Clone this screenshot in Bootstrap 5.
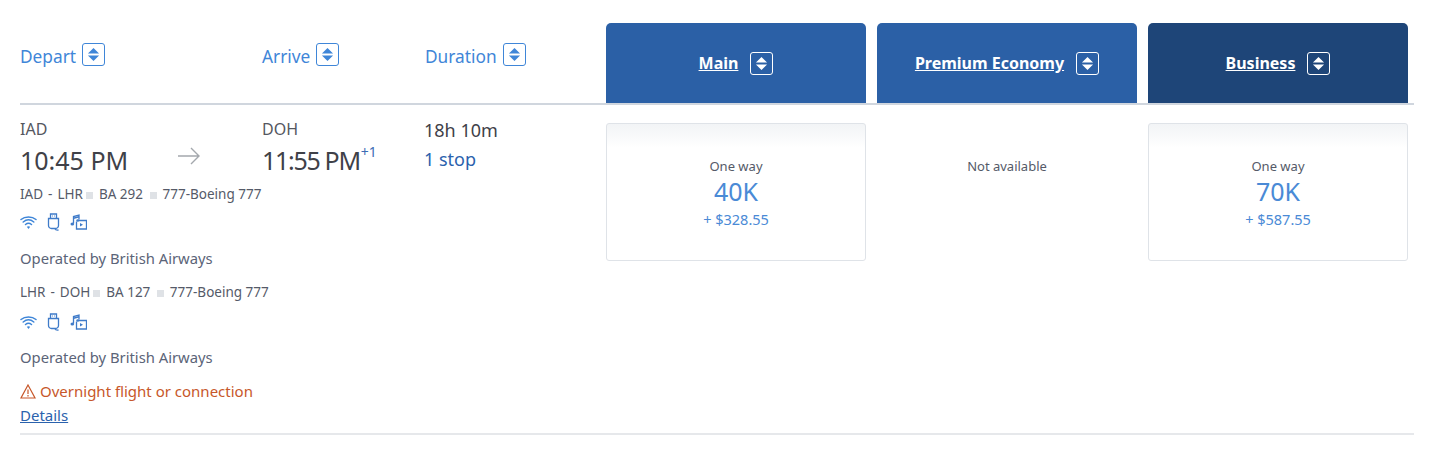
<!DOCTYPE html>
<html lang="en">
<head>
  <meta charset="UTF-8">
  <title>Flight results</title>
  <link href="https://cdn.jsdelivr.net/npm/bootstrap@5.3.0/dist/css/bootstrap.min.css" rel="stylesheet">
  <style>
    body { font-family: "Noto Sans", "Open Sans", sans-serif; color: #4d4f5c; background: #fff; }
    .results { width: 1394px; margin-left: 20px; }
    .head-row { height: 82px; margin-top: 23px; border-bottom: 2px solid #d0d6de; }
    .w-depart { width: 242px; }
    .w-arrive { width: 163px; }
    .w-duration { width: 181px; }
    .fare-cols { width: 802px; gap: 11px; }
    .fare-w { width: 260px; }
    .sort-head { color: #3f86d8; font-size: 17.300px; line-height: 24px; padding-top: 20px; }
    .sort-box { width: 23px; height: 23px; border: 1px solid currentColor; border-radius: 3px; display: inline-flex; align-items: center; justify-content: center; margin-left: 6px; vertical-align: 1px; }
    .cabin { background: #2b60a6; height: 80px; border-radius: 5px 5px 0 0; color: #fff; font-weight: 700; font-size: 16px; }
    .cabin a { color: #fff; }
    .cabin .sort-box { margin-left: 12px; }
    .cabin-dark { background: #1e4578; }
    .flight-row { height: 330px; border-bottom: 2px solid #e6e8eb; }
    .info-col { width: 586px; }
    .airport { font-size: 16px; line-height: 22px; padding-top: 13px; color: #55575f; }
    .clock { font-size: 25px; line-height: 34px; margin-top: 3px; color: #3f4148; white-space: nowrap; }
    .clock-tight { letter-spacing: -1.300px; }
    .clock sup { font-size: 14px; letter-spacing: 0; margin-left: 1px; color: #3c6cb5; top: -13px; }
    .arrow-mark { margin: 6px 0 0 157px; }
    .dur { font-size: 18px; line-height: 26px; padding-top: 12px; margin-left: -1px; color: #3f4148; }
    .stops { font-size: 18px; line-height: 32px; margin-left: -1px; color: #2b62ad; }
    .seg { font-size: 13.500px; line-height: 20px; color: #555a68; white-space: nowrap; }
    .seg-first { margin-top: 7px; }
    .seg-code { word-spacing: 1.500px; }
    .seg-dot { display: inline-block; width: 7px; height: 7px; background: #dfe2e6; margin: 0 6px 0 3px; }
    .amenities { height: 18px; margin-top: 9px; gap: 10px; }
    .amenities svg { display: block; }
    .amenities-low { margin-top: 11px; }
    .operated { font-size: 14.800px; line-height: 20px; color: #5b6478; margin-top: 17px; margin-bottom: 14px; }
    .operated-low { margin-top: 16px; }
    .overnight { font-size: 15px; line-height: 20px; color: #c7572a; margin-top: 14px; }
    .details-link { font-size: 15px; line-height: 20px; color: #2b62ad; margin-top: 4px; display: inline-block; }
    .fare-box { height: 138px; margin-top: 18px; border: 1px solid #dfe3e8; border-radius: 3px; background: linear-gradient(#f2f4f6, #fff 24px); text-align: center; padding-top: 33px; }
    .fare-none { margin-top: 18px; text-align: center; padding-top: 34px; font-size: 13px; line-height: 18px; color: #555a68; }
    .fare-label { font-size: 13px; line-height: 18px; color: #555a68; }
    .fare-miles { font-size: 25px; line-height: 34px; margin-top: -1px; color: #4a8ad6; }
    .fare-cash { font-size: 14.500px; line-height: 20px; margin-top: 1px; color: #4a8ad6; }
  </style>
</head>
<body>
  <svg width="0" height="0" class="position-absolute">
    <symbol id="sort-icon" viewBox="0 0 14 16">
      <path d="M7 1 13 7H1zM7 15 1 9h12z" fill="currentColor"/>
    </symbol>
    <symbol id="wifi-icon" viewBox="0 0 17 15" fill="none" stroke="currentColor" stroke-width="1.500" stroke-linecap="round">
      <path d="M1 4.500C5 1 12 1 16 4.500"/>
      <path d="M3.200 7C6.500 4.300 10.500 4.300 13.800 7"/>
      <path d="M5.500 9.500C7.300 8 9.700 8 11.500 9.500"/>
      <path d="M8.500 14 6.800 11.700C7.800 11 9.200 11 10.200 11.700z" fill="currentColor" stroke="none"/>
    </symbol>
    <symbol id="usb-icon" viewBox="0 0 13 18" fill="none" stroke="currentColor" stroke-width="1.300">
      <path d="M3.500 1h6v4.500h-6zM1.500 5.500h10v7a3 3 0 0 1-3 3h-4a3 3 0 0 1-3-3zM7.500 15.500c1 1.500 2.500 1.800 4 1.500"/>
      <path d="M5.200 3h.8M7.200 3h.8" stroke-width="1"/>
    </symbol>
    <symbol id="media-icon" viewBox="0 0 17 16" fill="none" stroke="currentColor" stroke-width="1.300">
      <path d="M3.500 9.500V2.500L9 1v4.500"/>
      <path d="M3.500 4.300 9 2.800" stroke-width="1.500"/>
      <ellipse cx="2.300" cy="10" rx="1.800" ry="1.500" fill="currentColor" stroke="none"/>
      <ellipse cx="7.800" cy="6.500" rx="1.500" ry="1.200" fill="currentColor" stroke="none"/>
      <path d="M6.500 7.500V15h10V6.500H9"/>
      <path d="M10 9v3.500l3-1.700z" fill="currentColor" stroke="none"/>
    </symbol>
  </svg>

  <div class="results">
    <div class="head-row d-flex">
      <div class="w-depart sort-head">Depart<span class="sort-box"><svg width="13" height="15"><use href="#sort-icon"/></svg></span></div>
      <div class="w-arrive sort-head">Arrive<span class="sort-box"><svg width="13" height="15"><use href="#sort-icon"/></svg></span></div>
      <div class="w-duration sort-head">Duration<span class="sort-box"><svg width="13" height="15"><use href="#sort-icon"/></svg></span></div>
      <div class="fare-cols d-flex">
        <div class="fare-w cabin d-flex align-items-center justify-content-center"><a href="#">Main</a><span class="sort-box"><svg width="13" height="15"><use href="#sort-icon"/></svg></span></div>
        <div class="fare-w cabin d-flex align-items-center justify-content-center"><a href="#">Premium Economy</a><span class="sort-box"><svg width="13" height="15"><use href="#sort-icon"/></svg></span></div>
        <div class="fare-w cabin cabin-dark d-flex align-items-center justify-content-center"><a href="#">Business</a><span class="sort-box"><svg width="13" height="15"><use href="#sort-icon"/></svg></span></div>
      </div>
    </div>

    <div class="flight-row d-flex">
      <div class="info-col">
        <div class="d-flex">
          <div class="w-depart">
            <div class="airport">IAD</div>
            <div class="d-flex">
              <div class="clock">10:45 PM</div>
              <svg class="arrow-mark position-absolute" width="24" height="20" viewBox="0 0 24 20" fill="none" stroke="#a4a8ad" stroke-width="1.400"><path d="M1 10h21M14 2l8 8-8 8"/></svg>
            </div>
          </div>
          <div class="w-arrive">
            <div class="airport">DOH</div>
            <div class="clock clock-tight">11:55 PM<sup>+1</sup></div>
          </div>
          <div class="w-duration">
            <div class="dur">18h 10m</div>
            <div class="stops">1 stop</div>
          </div>
        </div>

        <div class="seg seg-first"><span class="seg-code">IAD - LHR</span><span class="seg-dot"></span>BA 292 <span class="seg-dot"></span>777-Boeing 777</div>
        <div class="amenities d-flex align-items-center">
          <svg width="17" height="15" color="#3f86d8"><use href="#wifi-icon"/></svg>
          <svg width="13" height="18" color="#3f7bc9"><use href="#usb-icon"/></svg>
          <svg width="17" height="16" color="#3f7bc9"><use href="#media-icon"/></svg>
        </div>
        <div class="operated">Operated by British Airways</div>

        <div class="seg"><span class="seg-code">LHR - DOH</span><span class="seg-dot"></span>BA 127 <span class="seg-dot"></span>777-Boeing 777</div>
        <div class="amenities amenities-low d-flex align-items-center">
          <svg width="17" height="15" color="#3f86d8"><use href="#wifi-icon"/></svg>
          <svg width="13" height="18" color="#3f7bc9"><use href="#usb-icon"/></svg>
          <svg width="17" height="16" color="#3f7bc9"><use href="#media-icon"/></svg>
        </div>
        <div class="operated operated-low mb-0">Operated by British Airways</div>

        <div class="overnight d-flex align-items-center">
          <svg class="me-1" width="16" height="15" viewBox="0 0 16 15" fill="none" stroke="#c7572a" stroke-width="1.200"><path d="M8 1 15 14H1z"/><path d="M8 5.500v4.500M8 11v1.500"/></svg>
          Overnight flight or connection
        </div>
        <a href="#" class="details-link">Details</a>
      </div>

      <div class="fare-cols d-flex">
        <div class="fare-w fare-box">
          <div class="fare-label">One way</div>
          <div class="fare-miles">40K</div>
          <div class="fare-cash">+ $328.55</div>
        </div>
        <div class="fare-w fare-none">Not available</div>
        <div class="fare-w fare-box">
          <div class="fare-label">One way</div>
          <div class="fare-miles">70K</div>
          <div class="fare-cash">+ $587.55</div>
        </div>
      </div>
    </div>
  </div>

  <script src="https://cdn.jsdelivr.net/npm/bootstrap@5.3.0/dist/js/bootstrap.bundle.min.js"></script>
</body>
</html>
